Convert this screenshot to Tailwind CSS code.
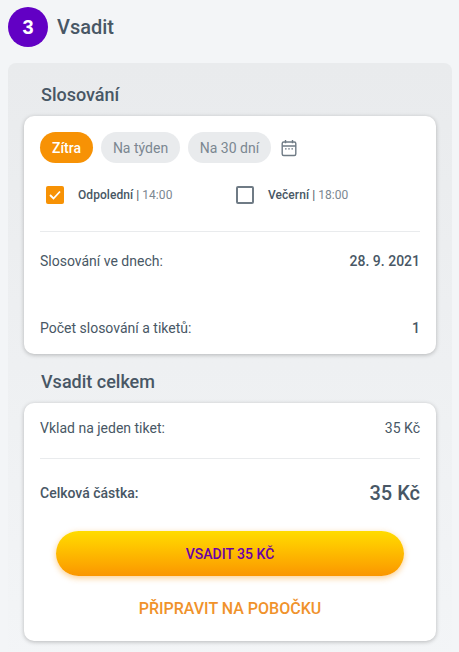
<!DOCTYPE html>
<html lang="cs">
<head>
<meta charset="utf-8">
<script src="https://cdn.jsdelivr.net/npm/@tailwindcss/browser@4"></script>
</head>
<body class="bg-[#f3f5f7] font-['Roboto',sans-serif] text-[#485765] w-[459px] h-[652px] overflow-hidden">
<div class="flex gap-[9px] pl-2 pt-[7px] h-[63px] items-start">
  <div class="w-10 h-10 rounded-full bg-[#6200c4] text-white font-['Liberation_Sans',sans-serif] font-bold text-[20px] flex items-center justify-center">3</div>
  <div class="text-[20px] font-medium leading-10">Vsadit</div>
</div>
<div class="mx-2 w-[444px] h-[600px] px-4 rounded-t-lg bg-gradient-to-b from-[#e9ebed] to-[#f3f5f7]">
  <h2 class="pl-[17px] text-[18px] font-medium h-[53px] leading-[63px]">Slosování</h2>
  <div class="bg-white rounded-[10px] shadow-[0_1px_4px_rgba(0,0,0,0.25)] h-[238px] px-4 pt-4">
    <div class="flex items-center gap-2 h-[31px]">
      <span class="h-[31px] w-[53px] rounded-full bg-[#f79205] text-white text-sm font-medium flex items-center justify-center">Zítra</span>
      <span class="h-[31px] w-[79px] rounded-full bg-[#e9ebed] text-[#7b8791] text-sm flex items-center justify-center">Na týden</span>
      <span class="h-[31px] w-[83px] rounded-full bg-[#e9ebed] text-[#7b8791] text-sm flex items-center justify-center">Na 30 dní</span>
      <svg class="ml-[1px]" width="18" height="18" viewBox="0 0 18 18" fill="none" stroke="#6f7b85" stroke-width="1.4"><rect x="2.2" y="3" width="13.6" height="13.5" rx="1.5"/><path d="M2.2 7H15.8M5.5 1v3.2M12.5 1v3.2"/><path d="M5 9.8h1.6M8.2 9.8h1.6M11.4 9.8H13" stroke-width="1.2"/></svg>
    </div>
    <div class="flex mt-[23px] h-[18px] items-center text-xs">
      <div class="flex items-center w-[190px] pl-1.5">
        <span class="w-[18px] h-[18px] rounded-[2px] bg-[#f79205] flex items-center justify-center"><svg width="12" height="10" viewBox="0 0 12 10" fill="none" stroke="#fff" stroke-width="1.8"><path d="M1 5l3.5 3.5L11 1.5"/></svg></span>
        <span class="ml-[14px] tracking-[0.005em]"><b class="font-medium">Odpolední</b> | <span class="text-[#7b8791]">14:00</span></span>
      </div>
      <div class="flex items-center">
        <span class="ml-1.5 w-[18px] h-[18px] rounded-[2px] border-2 border-[#6f7b85]"></span>
        <span class="ml-[14px] tracking-[0.005em]"><b class="font-medium">Večerní</b> | <span class="text-[#7b8791]">18:00</span></span>
      </div>
    </div>
    <div class="border-t border-[#e9ebed] mt-[27px]"></div>
    <div class="flex justify-between items-center text-sm mt-[19px] h-[20px]"><span>Slosování ve dnech:</span><span class="font-medium">28. 9. 2021</span></div>
    <div class="flex justify-between items-center text-sm mt-[47px] h-[20px]"><span>Počet slosování a tiketů:</span><span class="font-medium">1</span></div>
  </div>
  <h2 class="pl-[17px] text-[18px] font-medium h-[49px] leading-[56px]">Vsadit celkem</h2>
  <div class="bg-white rounded-[10px] shadow-[0_1px_4px_rgba(0,0,0,0.25)] h-[238px] px-4">
    <div class="flex justify-between items-center text-sm pt-[15px] h-[35px]"><span>Vklad na jeden tiket:</span><span>35 Kč</span></div>
    <div class="border-t border-[#e9ebed] mt-[20px]"></div>
    <div class="flex justify-between items-center mt-[22px] h-6"><span class="text-sm font-medium">Celková částka:</span><span class="text-[20px] font-medium">35 Kč</span></div>
    <button class="block mx-4 mt-[26px] w-[348px] h-[45px] rounded-full bg-gradient-to-b from-[#ffdc00] to-[#fa9600] shadow-[0_2px_6px_rgba(247,146,5,0.45)] text-[#6a00a8] text-sm font-medium">VSADIT 35 KČ</button>
    <div class="text-center text-[#f0922b] text-base font-medium mt-[23px] leading-5">PŘIPRAVIT NA POBOČKU</div>
  </div>
</div>
</body>
</html>
